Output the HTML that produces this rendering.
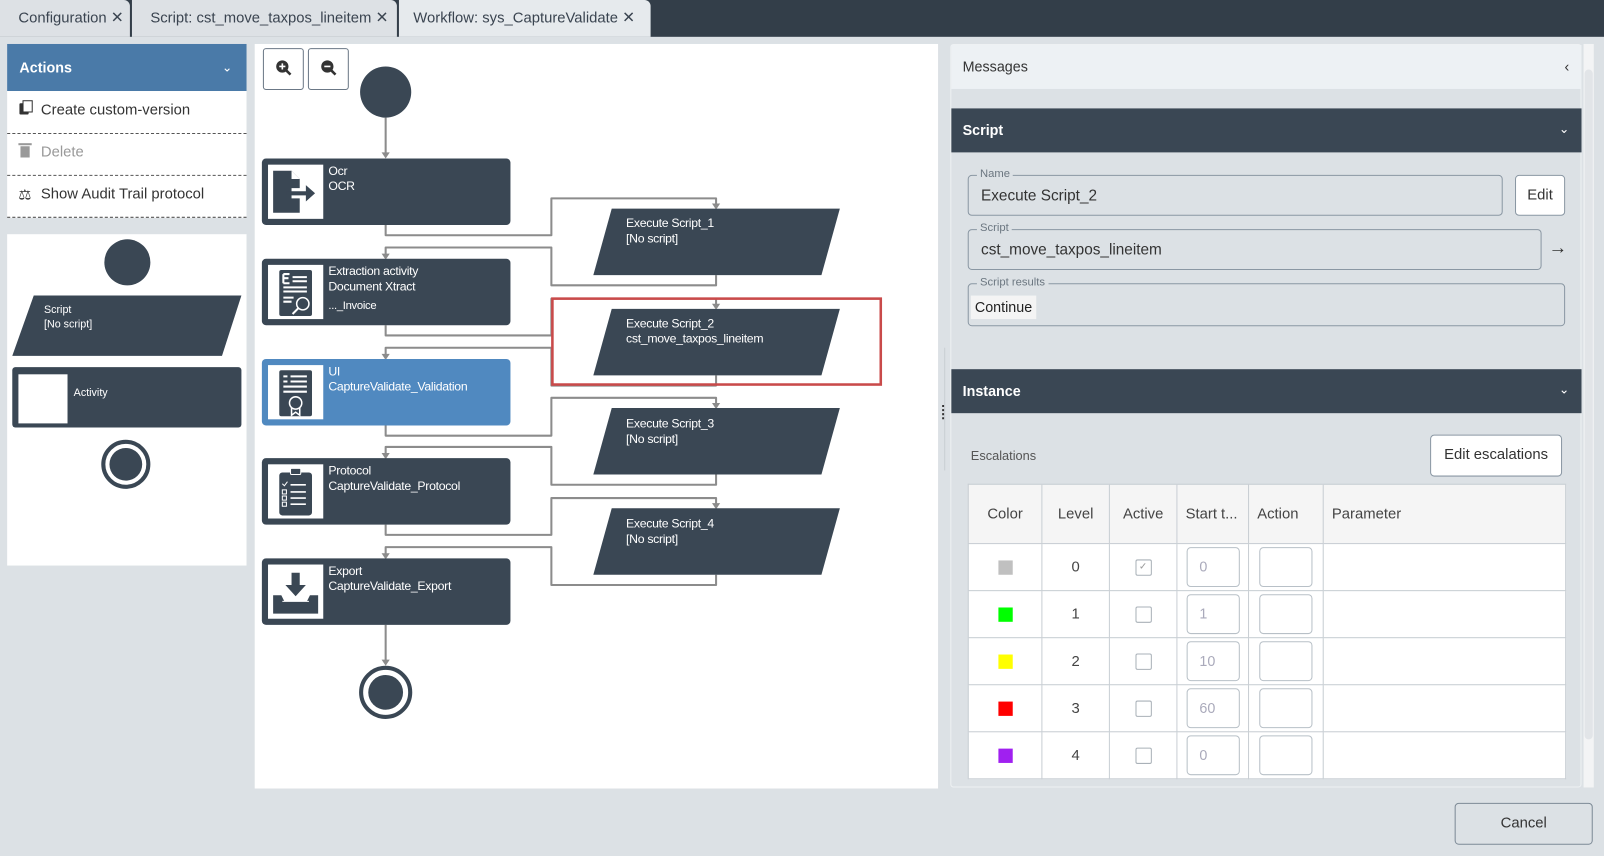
<!DOCTYPE html>
<html><head><meta charset="utf-8">
<style>
html,body{margin:0;padding:0;width:1604px;height:856px;overflow:hidden;background:#dce1e5;font-family:"Liberation Sans",sans-serif;}
#w{position:absolute;left:0;top:0;width:1568px;height:837px;transform:scale(1.02296,1.0227);transform-origin:0 0;background:#dce1e5;}
.a{position:absolute;}
.tab{position:absolute;top:0;height:36px;background:#dde1e5;color:#3a4450;font-size:14.5px;line-height:35px;padding-left:18px;box-sizing:border-box;border-radius:0 6px 0 0;}
.node{position:absolute;left:256px;width:243px;height:65px;background:#3a4754;border-radius:4px;color:#fff;font-size:12px;line-height:15px;}
.node .ic{position:absolute;left:6px;top:6px;width:54px;height:53px;background:#fff;}
.node .t{position:absolute;left:65px;top:5px;letter-spacing:-0.3px;}
.par{position:absolute;left:580px;width:241px;height:65px;}
.par .t{position:absolute;left:32px;top:7px;color:#fff;font-size:12px;line-height:15px;letter-spacing:-0.3px;}
.fs{position:absolute;border:1px solid #8a97a3;border-radius:4px;box-sizing:border-box;}
.fs .l{position:absolute;left:8px;top:-8px;background:#dce1e5;padding:0 3px;font-size:11px;color:#6b7680;}
.fs .v{position:absolute;left:12px;top:11px;font-size:15px;color:#333;}
.btn{position:absolute;background:#fff;border:1px solid #8a97a3;border-radius:4px;box-sizing:border-box;text-align:center;font-size:14.5px;color:#333;}
td,th{border-right:1px solid #c9cfd4;border-bottom:1px solid #c9cfd4;padding:0;text-align:center;font-size:14.5px;color:#444;}
th{font-weight:normal;background:#f5f5f5;height:57px;}
td{height:45px;background:#fff;}
.sq{display:inline-block;width:14px;height:14px;vertical-align:middle;}
.cb{display:inline-block;width:14px;height:14px;border:1px solid #a9b1b8;border-radius:2px;vertical-align:middle;}
.in{width:52px;height:39px;border:1px solid #b8c0c7;border-radius:4px;margin:0 auto;box-sizing:border-box;text-align:left;padding-left:12px;line-height:37px;color:#aab;font-size:14px;}
</style></head><body><div id="w">
<!-- tab bar -->
<div class="a" style="left:0;top:0;width:1568px;height:36px;background:#333e49"></div>
<div class="tab" style="left:0;width:127px;">Configuration <span style="font-size:15px">✕</span></div>
<div class="tab" style="left:129px;width:259px;">Script: cst_move_taxpos_lineitem <span style="font-size:15px">✕</span></div>
<div class="tab" style="left:390px;width:246px;background:#e6eaed;padding-left:14px;">Workflow: sys_CaptureValidate <span style="font-size:15px">✕</span></div>

<!-- left panel -->
<div class="a" style="left:7px;top:43px;width:234px;height:46px;background:#4a7aa8;color:#fff;font-weight:bold;font-size:14px;line-height:46px;padding-left:12px;box-sizing:border-box;">Actions<span style="position:absolute;right:14px;top:0;font-weight:normal;font-size:12px">&#8964;</span></div>
<div class="a" style="left:7px;top:89px;width:234px;height:124px;background:#fff;font-size:14.5px;color:#333;">
 <div class="a" style="left:0;top:0;width:234px;height:41px;border-bottom:1px dashed #555;line-height:38px;"><span style="position:absolute;left:12px;top:12px;width:9px;height:11px;background:#333;border-radius:1px"></span><span style="position:absolute;left:15px;top:9px;width:8px;height:10px;border:1px solid #333;background:#fff"></span><span style="position:absolute;left:33px">Create custom-version</span></div>
 <div class="a" style="left:0;top:41px;width:234px;height:41px;border-bottom:1px dashed #555;line-height:38px;color:#999"><span style="position:absolute;left:13px;top:13px;width:9px;height:11px;background:#999"></span><span style="position:absolute;left:11px;top:10px;width:13px;height:2px;background:#999"></span><span style="position:absolute;left:33px">Delete</span></div>
 <div class="a" style="left:0;top:82px;width:234px;height:41px;border-bottom:1px dashed #555;line-height:38px;"><span style="position:absolute;left:11px;top:0;font-size:14px">⚖</span><span style="position:absolute;left:33px">Show Audit Trail protocol</span></div>
</div>
<div class="a" style="left:7px;top:229px;width:234px;height:324px;background:#fff;">
 <div class="a" style="left:95px;top:5px;width:45px;height:45px;border-radius:50%;background:#3a4754"></div>
 <svg class="a" style="left:0;top:55px" width="234" height="70"><polygon points="26,5 229,5 210,64 5,64" fill="#3a4754"/><text x="36" y="22" fill="#fff" font-size="10.5" font-family="Liberation Sans">Script</text><text x="36" y="36" fill="#fff" font-size="10.5" font-family="Liberation Sans">[No script]</text></svg>
 <div class="a" style="left:5px;top:130px;width:224px;height:59px;background:#3a4754;border-radius:3px"><div class="a" style="left:6px;top:7px;width:48px;height:48px;background:#fff"></div><div class="a" style="left:60px;top:19px;color:#fff;font-size:10.5px">Activity</div></div>
 <div class="a" style="left:92px;top:201px;width:40px;height:40px;border:4px solid #3a4754;border-radius:50%;"><div class="a" style="left:4px;top:4px;width:32px;height:32px;border-radius:50%;background:#3a4754"></div></div>
</div>

<!-- canvas -->
<div class="a" style="left:249px;top:43px;width:668px;height:728px;background:#fff;">
 <div class="a" style="left:8px;top:4px;width:40px;height:41px;border:1px solid #6b7886;border-radius:3px;box-sizing:border-box"><svg width="38" height="39"><circle cx="18" cy="17" r="6" fill="#333"/><path d="M22 21l4 4" stroke="#333" stroke-width="2.5"/><path d="M15 17h6M18 14v6" stroke="#fff" stroke-width="1.6"/></svg></div>
 <div class="a" style="left:52px;top:4px;width:40px;height:41px;border:1px solid #6b7886;border-radius:3px;box-sizing:border-box"><svg width="38" height="39"><circle cx="18" cy="17" r="6" fill="#333"/><path d="M22 21l4 4" stroke="#333" stroke-width="2.5"/><path d="M15 17h6" stroke="#fff" stroke-width="1.6"/></svg></div>
</div>
<svg class="a" style="left:0;top:0" width="920" height="800">
 <g fill="none" stroke="#8c8c8c" stroke-width="2" stroke-linejoin="round">
 <path d="M377 115V152"/>
 <path d="M377 220V230H539V194H700V202"/>
 <path d="M700 269V279H539V242H377V251"/>
 <path d="M377 318V328H539V292H700V300"/>
 <path d="M700 367V377H539V340H377V349"/>
 <path d="M377 416V426H539V389H700V397"/>
 <path d="M700 464V474H539V437H377V446"/>
 <path d="M377 513V523H539V487H700V495"/>
 <path d="M700 562V572H539V535H377V544"/>
 <path d="M377 611V648"/>
 </g>
 <g fill="#8c8c8c"><path d="M373 149l4 6 4-6z"/><path d="M696 199l4 6 4-6z"/><path d="M373 248l4 6 4-6z"/><path d="M696 297l4 6 4-6z"/><path d="M373 346l4 6 4-6z"/><path d="M696 394l4 6 4-6z"/><path d="M373 443l4 6 4-6z"/><path d="M696 492l4 6 4-6z"/><path d="M373 541l4 6 4-6z"/><path d="M373 645l4 6 4-6z"/></g>
 <circle cx="377" cy="90" r="25" fill="#3a4754"/>
 <circle cx="377" cy="677" r="24" fill="none" stroke="#3a4754" stroke-width="4"/>
 <circle cx="377" cy="677" r="17" fill="#3a4754"/>
 <g fill="#3a4754"><polygon points="598,204 821,204 803,269 580,269"/><polygon points="598,302 821,302 803,367 580,367"/><polygon points="598,399 821,399 803,464 580,464"/><polygon points="598,497 821,497 803,562 580,562"/></g>
 <rect x="540" y="292" width="321" height="84" fill="none" stroke="#c94a4a" stroke-width="2.5"/>
 <g fill="#fff" font-family="Liberation Sans" font-size="12" letter-spacing="-0.3">
 <text x="612" y="222">Execute Script_1</text><text x="612" y="237">[No script]</text>
 <text x="612" y="320">Execute Script_2</text><text x="612" y="335">cst_move_taxpos_lineitem</text>
 <text x="612" y="418">Execute Script_3</text><text x="612" y="433">[No script]</text>
 <text x="612" y="516">Execute Script_4</text><text x="612" y="531">[No script]</text>
 </g>
</svg>
<div class="node" style="top:155px"><div class="ic"><svg width="54" height="53"><path d="M5 6h18l8 8v9h-8v10h8v14H5z" fill="#3a4754"/><path d="M23 6v8h8z" fill="#fff"/><path d="M23 4l8 8" stroke="#fff"/><path d="M18 28h20" stroke="#3a4754" stroke-width="4"/><path d="M37 20l9 8-9 8z" fill="#3a4754"/></svg></div><div class="t">Ocr<br>OCR</div></div>
<div class="node" style="top:253px"><div class="ic"><svg width="54" height="53"><rect x="11" y="5" width="32" height="45" rx="2" fill="#3a4754"/><g stroke="#fff" stroke-width="2"><path d="M15 9v9M15 9h6M15 13h5M15 18h6M24 12h14M24 16h14M15 22h23M15 26h23M15 32h10M15 36h8"/></g><circle cx="34" cy="38" r="6" fill="#3a4754" stroke="#fff" stroke-width="1.5"/><path d="M30 42l-6 6" stroke="#fff" stroke-width="2"/></svg></div><div class="t">Extraction activity<br>Document Xtract<br><span style="font-size:11px;line-height:22px">..._Invoice</span></div></div>
<div class="node" style="top:351px;background:#5089c0"><div class="ic"><svg width="54" height="53"><rect x="11" y="5" width="32" height="45" rx="2" fill="#3a4754"/><g stroke="#fff" stroke-width="2"><path d="M15 11h4M22 11h16M15 16h4M22 16h16M15 21h23M15 26h23"/></g><circle cx="27" cy="37" r="6" fill="none" stroke="#fff" stroke-width="1.5"/><path d="M23 42v7l4-3 4 3v-7" fill="none" stroke="#fff" stroke-width="1.5"/></svg></div><div class="t">UI<br>CaptureValidate_Validation</div></div>
<div class="node" style="top:448px"><div class="ic"><svg width="54" height="53"><rect x="11" y="8" width="32" height="42" rx="3" fill="#3a4754"/><rect x="22" y="4" width="10" height="6" rx="1" fill="#3a4754" stroke="#fff"/><g stroke="#fff" stroke-width="1.6"><path d="M22 20h15M22 27h15M22 33h15M22 39h15"/></g><g fill="none" stroke="#fff" stroke-width="1"><rect x="14" y="25" width="4" height="4"/><rect x="14" y="31" width="4" height="4"/><rect x="14" y="37" width="4" height="4"/></g><path d="M14 19l2 2 3-4" stroke="#fff" fill="none"/></svg></div><div class="t">Protocol<br>CaptureValidate_Protocol</div></div>
<div class="node" style="top:546px"><div class="ic"><svg width="54" height="53"><path d="M23 8h8v12h6l-10 11-10-11h6z" fill="#3a4754"/><path d="M5 30h8l3 6h22l3-6h8v18H5z" fill="#3a4754"/><path d="M14 36h26" stroke="#fff"/></svg></div><div class="t">Export<br>CaptureValidate_Export</div></div>

<!-- splitter -->
<div class="a" style="left:921px;top:396px;width:2px;height:14px;border-left:2px dotted #333"></div>
<div class="a" style="left:923px;top:340px;width:1px;height:120px;background:#c8ced3"></div>

<!-- right panel -->
<div class="a" style="left:929px;top:43px;width:617px;height:727px;background:#dce1e5;border:1px solid #eef1f3;border-radius:3px;box-sizing:border-box"></div>
<div class="a" style="left:930px;top:44px;width:616px;height:43px;background:#edf1f4;font-size:14px;color:#333;line-height:43px;padding-left:11px;box-sizing:border-box">Messages<span style="position:absolute;right:12px;top:0">‹</span></div>
<div class="a" style="left:930px;top:106px;width:616px;height:43px;background:#3a4754;color:#fff;font-weight:bold;font-size:14px;line-height:43px;padding-left:11px;box-sizing:border-box">Script<span style="position:absolute;right:12px;top:-1px;font-weight:normal;font-size:12px">&#8964;</span></div>
<div class="fs" style="left:946px;top:171px;width:523px;height:40px"><span class="l">Name</span><span class="v">Execute Script_2</span></div>
<div class="btn" style="left:1481px;top:171px;width:49px;height:40px;line-height:38px">Edit</div>
<div class="fs" style="left:946px;top:224px;width:561px;height:40px"><span class="l">Script</span><span class="v">cst_move_taxpos_lineitem</span></div>
<div class="a" style="left:1514px;top:232px;font-size:18px;color:#333">→</div>
<div class="fs" style="left:946px;top:277px;width:584px;height:42px"><span class="l">Script results</span><span class="a" style="left:2px;top:11px;width:64px;height:23px;background:#f4f4f4;font-size:14px;line-height:23px;text-align:center;color:#222">Continue</span></div>
<div class="a" style="left:930px;top:361px;width:616px;height:43px;background:#3a4754;color:#fff;font-weight:bold;font-size:14px;line-height:43px;padding-left:11px;box-sizing:border-box">Instance<span style="position:absolute;right:12px;top:-1px;font-weight:normal;font-size:12px">&#8964;</span></div>
<div class="a" style="left:949px;top:439px;font-size:12.5px;color:#555">Escalations</div>
<div class="btn" style="left:1398px;top:425px;width:129px;height:41px;line-height:39px">Edit escalations</div>
<table class="a" style="left:946px;top:473px;width:585px;border-collapse:collapse;border:1px solid #c9cfd4;table-layout:fixed">
<colgroup><col style="width:72px"><col style="width:66px"><col style="width:66px"><col style="width:70px"><col style="width:73px"><col></colgroup>
<tr><th>Color</th><th>Level</th><th>Active</th><th style="text-align:left;padding-left:8px">Start t...</th><th style="text-align:left;padding-left:8px">Action</th><th style="text-align:left;padding-left:8px">Parameter</th></tr>
<tr><td><span class="sq" style="background:#c0c0c0"></span></td><td>0</td><td><span class="cb" style="font-size:10px;line-height:14px;color:#999">✓</span></td><td><div class="in">0</div></td><td><div class="in"></div></td><td></td></tr>
<tr><td><span class="sq" style="background:#00ff00"></span></td><td>1</td><td><span class="cb"></span></td><td><div class="in">1</div></td><td><div class="in"></div></td><td></td></tr>
<tr><td><span class="sq" style="background:#ffff00"></span></td><td>2</td><td><span class="cb"></span></td><td><div class="in">10</div></td><td><div class="in"></div></td><td></td></tr>
<tr><td><span class="sq" style="background:#ff0000"></span></td><td>3</td><td><span class="cb"></span></td><td><div class="in">60</div></td><td><div class="in"></div></td><td></td></tr>
<tr><td><span class="sq" style="background:#a020f0"></span></td><td>4</td><td><span class="cb"></span></td><td><div class="in">0</div></td><td><div class="in"></div></td><td></td></tr>
</table>
<!-- scrollbar -->
<div class="a" style="left:1548px;top:43px;width:10px;height:727px;background:#f3f4f5"></div>
<div class="a" style="left:1549px;top:68px;width:8px;height:655px;background:#e2e5e8;border-radius:4px"></div>

<div class="btn" style="left:1422px;top:785px;width:135px;height:41px;line-height:39px;background:#dce1e5;border-color:#7d8a96">Cancel</div>
</div></body></html>
